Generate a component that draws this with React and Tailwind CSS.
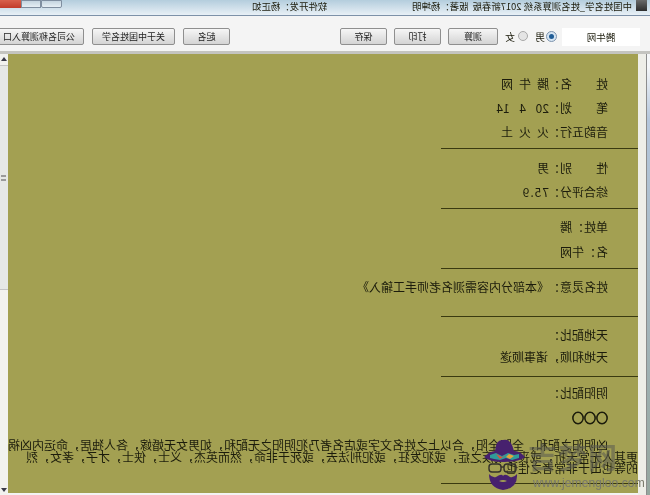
const Btn = ({ w, children }) => (
  <button
    className={`${w} h-[17px] shrink-0 border border-[#8f8f8f] rounded-[2px] bg-gradient-to-b from-[#f6f6f6] to-[#d4d4d4] text-[9px] leading-none text-[#222]`}
  >
    {children}
  </button>
);

const Rule = () => <div className="mt-auto w-[197px] h-px bg-[#3a3a10]" />;

// label col + colon + value, same columns in every row of the result list
const Row = ({ h, label, sep = true, value, tracking = "" }) => (
  <div className={`${h} flex items-center pl-[30px] whitespace-pre`}>
    <div className="w-[48px] flex justify-between">
      {label.split("").map((c, i) => (
        <span key={i}>{c}</span>
      ))}
    </div>
    {sep && <span className="w-[11px] text-center">：</span>}
    <span className={tracking}>{value}</span>
  </div>
);

const Plain = ({ h, children }) => (
  <div className={`${h} flex items-center pl-[30px] whitespace-pre`}>{children}</div>
);

const Hat = () => (
  <svg width="44" height="54" viewBox="0 0 44 54" className="shrink-0">
    <path d="M13 14 Q14 2 21 3 Q29 1 32 14 L33 16 L12 16 Z" fill="#47216e" />
    <path d="M2 20 Q8 14 13 14 L33 14 Q38 14 43 20 Q38 25 22 25 Q7 25 2 20 Z" fill="#47216e" />
    <path d="M8 18 L14 16 L20 19 L26 16 L32 18 L37 17 L37 21 L30 23 L24 21 L18 23 L12 22 L8 21 Z" fill="#2f9c9a" />
    <path d="M14 17 L20 20 L24 18 L18 22 Z" fill="#e0503c" />
    <path d="M27 17 L32 19 L28 22 L24 20 Z" fill="#e8a23c" />
    <rect x="7" y="27" width="12" height="8" rx="3" fill="none" stroke="#33302a" strokeWidth="1.4" />
    <rect x="22" y="27" width="12" height="8" rx="3" fill="none" stroke="#33302a" strokeWidth="1.4" />
    <path d="M19 30 L22 30" stroke="#33302a" strokeWidth="1.4" />
    <path d="M7 37 Q10 41 14 40 Q20 36 21 39 Q23 36 28 40 Q32 41 35 37 Q36 51 21 53 Q7 51 7 37 Z" fill="#47216e" />
    <path d="M17 44 Q21 42 25 44 Q21 46 17 44 Z" fill="#a3a052" />
  </svg>
);

export default function App() {
  return (
    <div className="relative w-[650px] h-[495px] overflow-hidden -scale-x-100 blur-[0.35px] flex flex-col bg-[#f3f3f3] font-['Noto_Sans_CJK_SC',sans-serif] text-[#1c1c0c]">
      {/* title bar */}
      <div className="h-[16px] shrink-0 flex items-start border-b border-[#7d91a8] bg-gradient-to-b from-[#b4cddd] to-[#e8f0f6] text-[9.4px] leading-[12px]">
        <div className="ml-[3px] w-[11px] h-[11px] bg-gradient-to-b from-[#6a6a6a] to-[#2e2e2e]" />
        <span className="ml-[4px] whitespace-pre">中国姓名学_姓名测算系统 2017新春版  版著：杨坤明</span>
        <span className="ml-[85px] whitespace-pre">软件开发：杨正如</span>
        <div className="ml-auto flex h-[8px]">
          <div className="w-[21px] border border-[#7f8ea0] rounded-b-[2px] bg-gradient-to-b from-[#c4d4e0] to-[#e6eef4]" />
          <div className="w-[20px] border border-[#7f8ea0] bg-gradient-to-b from-[#c4d4e0] to-[#e6eef4]" />
          <div className="w-[21px] bg-gradient-to-b from-[#d8604c] to-[#c23a2a]" />
        </div>
      </div>

      {/* toolbar */}
      <div className="h-[38px] shrink-0 flex items-start pt-[12px] pl-[10px] text-[10px] bg-[#f4f4f4] border-b-[3px] border-[#c4c4c0]">
        <div className="w-[78px] h-[18px] shrink-0 bg-white text-center text-[9.5px] leading-[18px]">腾牛网</div>
        <div className="ml-[5px] mt-[3px] w-[11px] h-[11px] shrink-0 rounded-full border border-[#7d93ad] bg-[#d5e4f2] flex items-center justify-center">
          <div className="w-[5px] h-[5px] rounded-full bg-[#1f5c96]" />
        </div>
        <span className="ml-[1px] w-[10px] leading-[17px]">男</span>
        <div className="ml-[7px] mt-[3px] w-[10px] h-[10px] shrink-0 rounded-full border border-[#a8a8a8] bg-[#e4e4e4]" />
        <span className="ml-[3px] w-[10px] leading-[17px]">女</span>
        <div className="ml-[7px] flex gap-[7px]">
          <Btn w="w-[50px]">测算</Btn>
          <Btn w="w-[47px]">打印</Btn>
          <Btn w="w-[47px]">保存</Btn>
        </div>
        <div className="ml-[110px] flex gap-[8px]">
          <Btn w="w-[47px]">起名</Btn>
          <Btn w="w-[83px]">关于中国姓名学</Btn>
          <Btn w="w-[90px]">公司名称测算入口</Btn>
        </div>
      </div>

      {/* body */}
      <div className="flex-1 flex min-h-0">
        <div className="w-[4px] shrink-0 bg-gradient-to-b from-[#f4f6f8] from-[3%] via-[#b4c6dc] via-[15%] to-[#95a69e] border-r border-[#8d8d8d]" />
        <div className="w-[8px] shrink-0 bg-[#eeeee8]" />

        <div className="w-[630px] shrink-0 h-[439px] bg-[#a3a052] text-[12px] leading-none flex flex-col overflow-hidden">
          <div className="h-[95px] shrink-0 flex flex-col pt-[18px]">
            <Row h="h-[24px]" label="姓名" value="腾牛网" tracking="tracking-[6px]" />
            <Row h="h-[24px]" label="笔划" value="20 4 14" tracking="[word-spacing:7px]" />
            <Row h="h-[24px]" label="音韵五行" value="火火土" tracking="tracking-[6px]" />
            <Rule />
          </div>
          <div className="h-[60px] shrink-0 flex flex-col pt-[6px]">
            <Row h="h-[25px]" label="性别" value="男" />
            <Row h="h-[24px]" label="综合评分" value="75.9" tracking="tracking-[1px]" />
            <Rule />
          </div>
          <div className="h-[60px] shrink-0 flex flex-col pt-[5px]">
            <Plain h="h-[25px]">单姓：腾</Plain>
            <Plain h="h-[25px]">名：牛网</Plain>
            <Rule />
          </div>
          <div className="h-[48px] shrink-0 flex flex-col pt-[6px]">
            <Row h="h-[24px]" label="姓名灵意" value="《本部分内容需测名老师手工输入》" />
            <Rule />
          </div>
          <div className="h-[60px] shrink-0 flex flex-col pt-[7px]">
            <Plain h="h-[22px]">天地配比：</Plain>
            <Plain h="h-[22px]">天地和顺，诸事顺遂</Plain>
            <Rule />
          </div>
          <div className="h-[107px] shrink-0 flex flex-col pt-[4px]">
            <Plain h="h-[24px]">阴阳配比：</Plain>
            <Plain h="h-[25px]">
              <span className="text-[12px] font-bold [-webkit-text-stroke:0.9px_#1c1c0c]">○○○</span>
            </Plain>
            <div className="mt-[9px] leading-[11.5px] whitespace-nowrap">
              <div className="pl-[30px]">凶阴阳之配和，全阴全阳，合以上之姓名文字或店名者乃犯阴阳之无配和，如男女无婚嫁，各人独居，命运内凶祸</div>
              <div>更其人无常夭折，或丧身或疾之症，或犯发狂，或犯刑法去，或死于非命，然而英杰，义士，侠士，才子，孝女，烈</div>
              <div>的等也出于非常者之佳也</div>
            </div>
            <Rule />
          </div>
        </div>

        {/* scrollbar */}
        <div className="w-[8px] shrink-0 flex flex-col items-center bg-[#f2f2ef]">
          <div className="mt-[3px] w-0 h-0 border-x-[3px] border-x-transparent border-b-[4px] border-b-[#3a3a48]" />
          <div className="mt-[4px] w-full h-[225px] bg-[#e6e8e6] border-y border-[#c4c4c4] flex items-center justify-center">
            <div className="w-[5px] h-[6px] border-y-2 border-[#9a9a9a]" />
          </div>
          <div className="mt-auto mb-[3px] w-0 h-0 border-x-[3px] border-x-transparent border-t-[4px] border-t-[#3a3a48]" />
        </div>
      </div>

      {/* watermark sits on top of the picture and is not mirrored */}
      <div className="absolute left-[8px] top-[437px] w-[160px] h-[56px] -scale-x-100 pointer-events-none">
        <div className="absolute left-0 top-0"><Hat /></div>
        <div className="absolute left-[46px] top-[2px] text-[29px] leading-[34px] font-bold tracking-[1px] text-[#5a5a50]/55 whitespace-nowrap">吉梦网</div>
        <div className="absolute left-[51px] top-[39px] text-[12px] leading-[14px] tracking-[0.1px] font-['Liberation_Sans',sans-serif] text-[#77776a] whitespace-nowrap">www.jemengloo.com</div>
      </div>
    </div>
  );
}
